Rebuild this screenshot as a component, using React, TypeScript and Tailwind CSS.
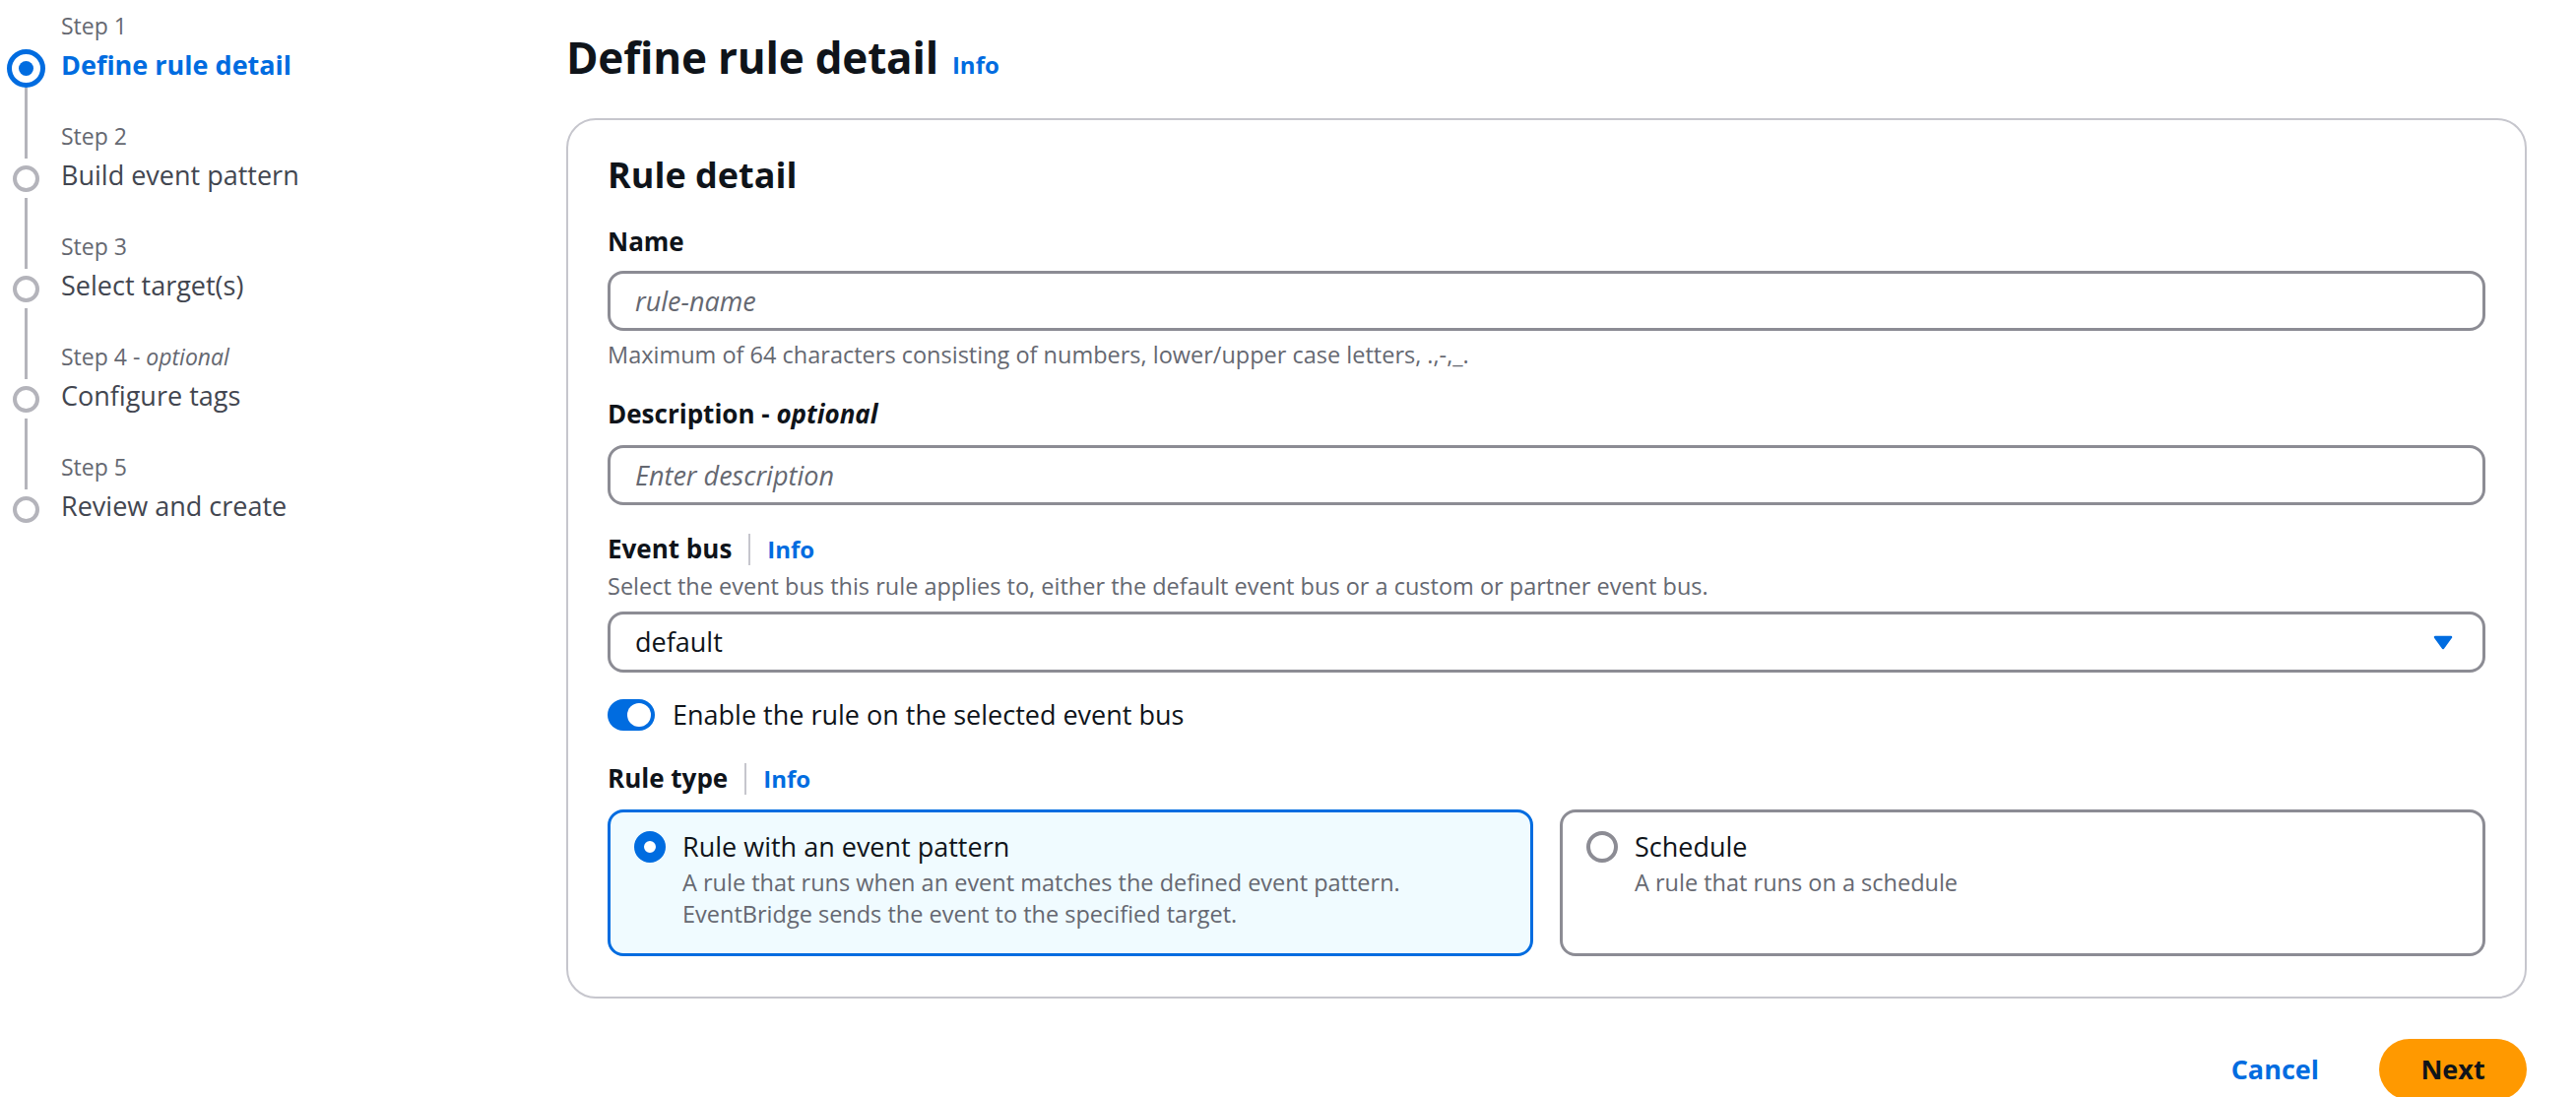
import { useState } from 'react';

const steps = [
  { label: 'Step 1', title: 'Define rule detail' },
  { label: 'Step 2', title: 'Build event pattern' },
  { label: 'Step 3', title: 'Select target(s)' },
  { label: 'Step 4', title: 'Configure tags', optional: true },
  { label: 'Step 5', title: 'Review and create' },
];

function StepNav() {
  return (
    <nav className="w-[575px] shrink-0 pt-[10px]">
      {steps.map((step, i) => {
        const active = i === 0;
        const last = i === steps.length - 1;
        return (
          <div key={step.label} className="flex gap-[10px]">
            <div className="flex w-[52px] flex-col items-center">
              <div className={`h-[39px] w-[3px] ${i === 0 ? '' : 'bg-[#b4b4bb]'}`} />
              <div className="flex h-[40px] w-[40px] items-center justify-center">
                {active ? (
                  <div className="flex h-[39px] w-[39px] items-center justify-center rounded-full border-[5px] border-[#006ce0] bg-white">
                    <div className="h-[15px] w-[15px] rounded-full bg-[#006ce0]" />
                  </div>
                ) : (
                  <div className="h-[27px] w-[27px] rounded-full border-[4px] border-[#b4b4bb] bg-white" />
                )}
              </div>
              <div className={`w-[3px] flex-1 ${last ? '' : 'bg-[#b4b4bb]'}`} />
            </div>
            <div className="pb-[38px]">
              <div className="text-[23px] leading-[32px] text-[#656871]">
                {step.label}
                {step.optional && (
                  <>
                    {' - '}
                    <i>optional</i>
                  </>
                )}
              </div>
              <div
                className={`mt-[6px] text-[27px] leading-[36px] ${
                  active ? 'font-bold text-[#006ce0]' : 'text-[#424650]'
                }`}
              >
                {step.title}
              </div>
            </div>
          </div>
        );
      })}
    </nav>
  );
}

function FieldLabel({ children, info }: { children: React.ReactNode; info?: boolean }) {
  return (
    <div className="flex items-baseline">
      <span className="text-[26px] font-bold leading-[34px] text-[#0f141a]">{children}</span>
      {info && (
        <>
          <span className="mx-[17px] h-[32px] w-[2px] self-center bg-[#c6c6cd]" />
          <a className="text-[24px] font-bold text-[#006ce0]">Info</a>
        </>
      )}
    </div>
  );
}

function TextInput({ placeholder }: { placeholder: string }) {
  return (
    <input
      placeholder={placeholder}
      className="h-[61px] w-full rounded-[16px] border-[3px] border-[#8c8c94] bg-white px-[25px] text-[27px] text-[#0f141a] outline-none placeholder:italic placeholder:text-[#656871]"
    />
  );
}

function Radio({ checked }: { checked: boolean }) {
  return checked ? (
    <div className="h-[32px] w-[32px] rounded-full border-[10px] border-[#006ce0] bg-white" />
  ) : (
    <div className="h-[32px] w-[32px] rounded-full border-[4px] border-[#8c8c94] bg-white" />
  );
}

function Tile({
  checked,
  title,
  lines,
  onClick,
}: {
  checked: boolean;
  title: string;
  lines: string[];
  onClick: () => void;
}) {
  return (
    <div
      onClick={onClick}
      className={`flex cursor-pointer gap-[17px] rounded-[16px] border-[3px] px-[24px] pb-[24px] pt-[17px] ${
        checked ? 'border-[#006ce0] bg-[#f0fbff]' : 'border-[#8c8c94] bg-white'
      }`}
    >
      <div className="flex h-[36px] items-center">
        <Radio checked={checked} />
      </div>
      <div>
        <div className="text-[27px] leading-[36px] text-[#0f141a]">{title}</div>
        <div className="mt-[2px] text-[23.5px] leading-[32px] text-[#656871]">
          {lines.map((l) => (
            <div key={l}>{l}</div>
          ))}
        </div>
      </div>
    </div>
  );
}

export default function App() {
  const [ruleType, setRuleType] = useState<'pattern' | 'schedule'>('pattern');
  const [enabled, setEnabled] = useState(true);

  return (
    <div className="flex min-h-screen bg-white font-['Open_Sans','Noto_Sans',sans-serif] text-[#0f141a]">
      <StepNav />

      <main className="flex-1 pr-[50px] pt-[30px]">
        <div className="flex items-baseline gap-[14px]">
          <h1 className="text-[44px] font-bold leading-[56px] tracking-[-0.2px] text-[#0f141a]">
            Define rule detail
          </h1>
          <a className="text-[24px] font-bold text-[#006ce0]">Info</a>
        </div>

        <div className="mt-[34px] rounded-[30px] border-2 border-[#c6c6cd] bg-white px-[40px] pb-[41px] pt-[34px]">
          <h2 className="text-[36px] font-bold leading-[44px] text-[#0f141a]">Rule detail</h2>

          <div className="mt-[28px]">
            <FieldLabel>Name</FieldLabel>
            <div className="mt-[13px]">
              <TextInput placeholder="rule-name" />
            </div>
            <p className="mt-[8px] text-[23.5px] leading-[32px] text-[#656871]">
              Maximum of 64 characters consisting of numbers, lower/upper case letters, .,-,_.
            </p>
          </div>

          <div className="mt-[27px]">
            <FieldLabel>
              Description - <i>optional</i>
            </FieldLabel>
            <div className="mt-[15px]">
              <TextInput placeholder="Enter description" />
            </div>
          </div>

          <div className="mt-[27px]">
            <FieldLabel info>Event bus</FieldLabel>
            <p className="mt-[3px] text-[23.5px] leading-[32px] text-[#656871]">
              Select the event bus this rule applies to, either the default event bus or a custom or partner event bus.
            </p>
            <div className="mt-[10px] flex h-[62px] items-center justify-between rounded-[16px] border-[3px] border-[#8c8c94] bg-white pl-[25px] pr-[30px]">
              <span className="text-[27px] text-[#0f141a]">default</span>
              <svg width="20" height="15" viewBox="0 0 20 15">
                <path d="M2 2 H18 L10 13 Z" fill="#006ce0" stroke="#006ce0" strokeWidth="2.5" strokeLinejoin="round" />
              </svg>
            </div>
          </div>

          <div className="mt-[25px] flex h-[36px] items-center gap-[18px]">
            <button
              onClick={() => setEnabled(!enabled)}
              className={`flex h-[32px] w-[48px] items-center rounded-full p-[4px] ${
                enabled ? 'justify-end bg-[#006ce0]' : 'justify-start bg-[#8c8c94]'
              }`}
            >
              <span className="h-[24px] w-[24px] rounded-full bg-white" />
            </button>
            <span className="text-[27px] leading-[36px] text-[#0f141a]">Enable the rule on the selected event bus</span>
          </div>

          <div className="mt-[29px]">
            <FieldLabel info>Rule type</FieldLabel>
            <div className="mt-[13px] grid grid-cols-2 gap-[27px]">
              <Tile
                checked={ruleType === 'pattern'}
                onClick={() => setRuleType('pattern')}
                title="Rule with an event pattern"
                lines={[
                  'A rule that runs when an event matches the defined event pattern.',
                  'EventBridge sends the event to the specified target.',
                ]}
              />
              <Tile
                checked={ruleType === 'schedule'}
                onClick={() => setRuleType('schedule')}
                title="Schedule"
                lines={['A rule that runs on a schedule']}
              />
            </div>
          </div>
        </div>

        <div className="mt-[41px] flex items-center justify-end gap-[61px]">
          <button className="text-[27px] font-bold text-[#006ce0]">Cancel</button>
          <button className="h-[62px] w-[150px] rounded-full bg-[#ff9900] text-[27px] font-bold text-[#0f141a]">
            Next
          </button>
        </div>
      </main>
    </div>
  );
}
